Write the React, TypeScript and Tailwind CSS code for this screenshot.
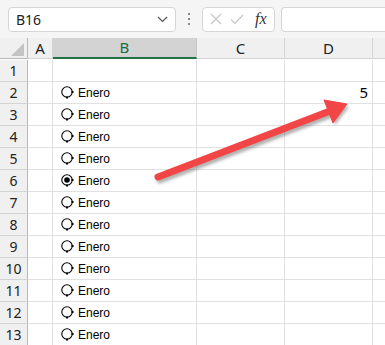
import React from 'react';

const ROWS = Array.from({ length: 13 }, (_, i) => i + 1);

// little legacy form-control radio
function Radio({ checked }: { checked: boolean }) {
  return (
    <svg width="14" height="14" viewBox="0 0 14 14" className="shrink-0">
      <circle cx="6" cy="6" r="5.2" fill="white" stroke="#000" strokeWidth="1.1" />
      {checked && <circle cx="6" cy="6" r="2.8" fill="#000" />}
      <rect x="10.5" y="5" width="2" height="2" fill="#000" />
      <rect x="5" y="10.5" width="2" height="2" fill="#000" />
    </svg>
  );
}

export default function App() {
  const cell = 'border-r border-b border-[#e1e1e1] bg-white';
  return (
    <div
      className="relative w-[385px] h-[345px] overflow-hidden bg-white text-black"
      style={{ fontFamily: '"Noto Sans", "Open Sans", sans-serif' }}
    >
      {/* Formula bar */}
      <div className="h-[38px] bg-[#f5f5f5] flex items-center pl-2 gap-[6px]">
        <div className="w-[168px] h-[25px] bg-white border border-[#d6d6d6] rounded-[4px] flex items-center justify-between pl-[7px] pr-[7px]">
          <span className="text-[14px] text-[#222]">B16</span>
          <svg width="11" height="7" viewBox="0 0 11 7">
            <path d="M1 1l4.5 4.5L10 1" fill="none" stroke="#555" strokeWidth="1.2" />
          </svg>
        </div>
        <div className="w-[14px] flex flex-col items-center gap-[3px]">
          <div className="w-[2px] h-[2px] bg-[#8a8a8a]" />
          <div className="w-[2px] h-[2px] bg-[#8a8a8a]" />
          <div className="w-[2px] h-[2px] bg-[#8a8a8a]" />
        </div>
        <div className="w-[73px] h-[25px] bg-white border border-[#d6d6d6] rounded-[4px] flex items-center pl-[7px] gap-[8px]">
          <svg width="12" height="12" viewBox="0 0 12 12">
            <path d="M1 1l10 10M11 1L1 11" stroke="#c4c4c4" strokeWidth="1.1" />
          </svg>
          <svg width="14" height="11" viewBox="0 0 14 11">
            <path d="M1 5.5l4 4L13 1" fill="none" stroke="#c4c4c4" strokeWidth="1.1" />
          </svg>
          <span
            className="text-[16px] italic text-[#333] leading-none ml-[3px]"
            style={{ fontFamily: '"Liberation Serif", serif' }}
          >
            fx
          </span>
        </div>
        <div className="flex-1 h-[25px] bg-white border border-[#d6d6d6] rounded-l-[4px] border-r-0" />
      </div>

      {/* Grid */}
      <div className="grid grid-cols-[28px_25px_144px_88px_88px_1fr] auto-rows-[22px]">
        {/* header row */}
        <div className="h-[21px] bg-[#f0f0f0] border-r border-b border-[#b9b9b9] flex items-end justify-end pr-[3px] pb-[2px]">
          <svg width="13" height="13" viewBox="0 0 13 13">
            <path d="M13 0V13H0Z" fill="#c3c3c3" />
          </svg>
        </div>
        <div className="h-[21px] bg-[#f0f0f0] border-r border-b border-[#d4d4d4] flex items-center justify-center text-[15px] text-[#222]">A</div>
        <div className="h-[21px] bg-[#d3d3d3] border-r border-[#c6c6c6] border-b-2 border-b-[#217346] flex items-center justify-center text-[15px] text-[#1d6b3f]">B</div>
        <div className="h-[21px] bg-[#f0f0f0] border-r border-b border-[#d4d4d4] flex items-center justify-center text-[15px] text-[#222]">C</div>
        <div className="h-[21px] bg-[#f0f0f0] border-r border-b border-[#d4d4d4] flex items-center justify-center text-[15px] text-[#222]">D</div>
        <div className="h-[21px] bg-[#f0f0f0] border-b border-[#d4d4d4]" />

        {ROWS.map((r) => (
          <React.Fragment key={r}>
            <div className="bg-[#f0f0f0] border-r border-r-[#b9b9b9] border-b border-b-[#d4d4d4] flex items-center justify-center text-[14px] text-[#222]">
              {r}
            </div>
            <div className={cell} />
            <div className={cell + ' flex items-center pl-[8px] gap-[3px]'}>
              {r > 1 && (
                <>
                  <Radio checked={r === 6} />
                  <span
                    className="text-[12px] leading-none"
                    style={{ fontFamily: '"Liberation Sans", Arial, sans-serif' }}
                  >
                    Enero
                  </span>
                </>
              )}
            </div>
            <div className={cell} />
            <div className={cell + ' flex items-center justify-end pr-[4px] text-[15px]'}>
              {r === 2 ? '5' : ''}
            </div>
            <div className="border-b border-[#e1e1e1] bg-white" />
          </React.Fragment>
        ))}
      </div>

      {/* Annotation arrow */}
      <svg className="absolute left-0 top-0 pointer-events-none" width="385" height="345">
        <defs>
          <filter id="sh" x="-10%" y="-30%" width="130%" height="180%">
            <feGaussianBlur stdDeviation="1.5" />
          </filter>
        </defs>
        <g transform="translate(2,3)" opacity="0.45" filter="url(#sh)">
          <line x1="158" y1="177" x2="330" y2="111" stroke="#555" strokeWidth="7" strokeLinecap="round" />
          <path d="M347 104L325 101L333 122Z" fill="#555" />
        </g>
        <line x1="158" y1="177" x2="330" y2="111" stroke="#f24646" strokeWidth="7" strokeLinecap="round" />
        <path d="M347 104L324 100L333 123Z" fill="#f24646" stroke="#f24646" strokeWidth="1" strokeLinejoin="round" />
      </svg>
    </div>
  );
}
